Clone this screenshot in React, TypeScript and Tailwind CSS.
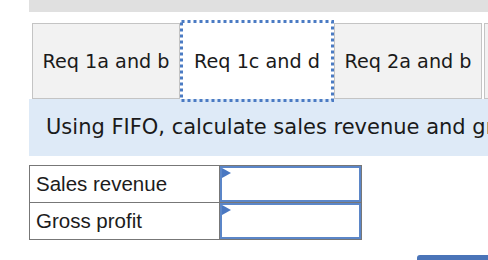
import React from 'react';

const tabFont = { fontFamily: '"DejaVu Sans", Verdana, sans-serif' };

const InputCell: React.FC = () => (
  <td className="border border-[#777] p-0 h-[37px]">
    <div className="relative h-full w-full border-2 border-[#5b86c8] bg-white">
      <svg className="absolute left-0 top-0" width="9" height="11" viewBox="0 0 9 11">
        <polygon points="0,0 9,5 0,10" fill="#4a78c2" />
      </svg>
    </div>
  </td>
);

export default function App() {
  return (
    <div className="h-[260px] w-[488px] overflow-hidden bg-white pl-[29px]">
      <div className="h-[12px] bg-[#e0e0e0]" />

      <div className="mt-[11px] flex whitespace-nowrap text-[19.2px] text-[#1a1a1a]" style={tabFont}>
        <div className="ml-[3px] flex h-[76px] w-[148px] shrink-0 items-center justify-center border border-[#c4c4c4] bg-[#f2f2f2] pt-[2px]">
          Req 1a and b
        </div>
        <div className="relative flex h-[76px] w-[154px] shrink-0 items-center justify-center bg-white pt-[2px]">
          Req 1c and d
          <svg className="absolute left-0 top-[-3px] z-10" width="154" height="82">
            <rect x="1.5" y="1.5" width="151" height="79" fill="none" stroke="#4b7bc3" strokeWidth="3" strokeDasharray="3 3" />
          </svg>
        </div>
        <div className="flex h-[76px] w-[148px] shrink-0 items-center justify-center border border-[#c4c4c4] bg-[#f2f2f2] pt-[2px]">
          Req 2a and b
        </div>
        <div className="ml-[2px] h-[76px] w-[100px] shrink-0 border border-[#c4c4c4] bg-[#f2f2f2]" />
      </div>

      <div className="flex h-[57px] items-center overflow-hidden whitespace-nowrap bg-[#deeaf7] pl-[17px] pt-[1px] text-[21px] text-[#1a1a1a]" style={tabFont}>
        Using FIFO, calculate sales revenue and gross profit.
      </div>

      <table
        className="mt-[9px] w-[333px] border-collapse text-[20.5px] text-[#1c1c1c]"
        style={{ fontFamily: '"Liberation Sans", Arial, sans-serif' }}
      >
        <tbody>
          <tr>
            <td className="h-[37px] w-[190px] border border-[#777] px-[6px] leading-none">Sales revenue</td>
            <InputCell />
          </tr>
          <tr>
            <td className="h-[37px] w-[190px] border border-[#777] px-[6px] leading-none">Gross profit</td>
            <InputCell />
          </tr>
        </tbody>
      </table>

      <div className="mt-[15px] flex pl-[388px]">
        <div className="h-[30px] w-[100px] shrink-0 rounded-tl-[3px] bg-[#4a74b8]" />
      </div>
    </div>
  );
}
